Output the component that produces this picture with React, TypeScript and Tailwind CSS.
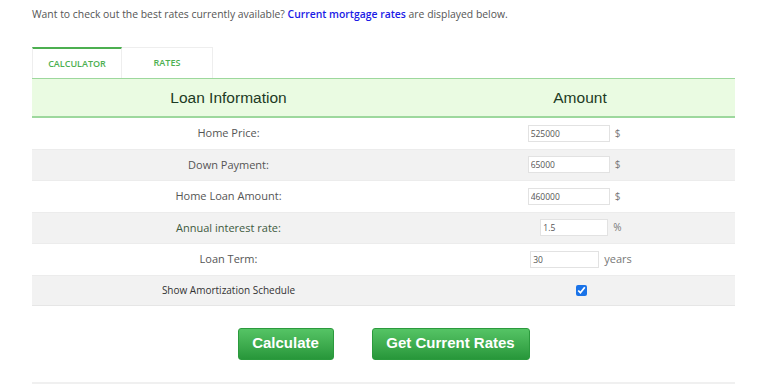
const rows = [
    { label: 'Home Price:', value: '525000', unit: '$', inputW: 'w-[82px]', tone: 'text-[#555]', shift: 'pr-[12px]' },
    { label: 'Down Payment:', value: '65000', unit: '$', inputW: 'w-[82px]', tone: 'text-[#555]', shift: 'pr-[12px]' },
    { label: 'Home Loan Amount:', value: '460000', unit: '$', inputW: 'w-[82px]', tone: 'text-[#555]', shift: 'pr-[12px]' },
    { label: 'Annual interest rate:', value: '1.5', unit: '%', inputW: 'w-[68px]', tone: 'text-[#3e5a3e]', shift: 'pl-[2px]' },
    { label: 'Loan Term:', value: '30', unit: 'years', inputW: 'w-[69px]', tone: 'text-[#555]', shift: 'pl-[2px]' },
];

export default function App() {
    return (
        <div className="w-[768px] h-[387px] bg-white overflow-hidden font-['Open_Sans',sans-serif]">
            {/* Intro line */}
            <p className="pl-[32px] pt-[6px] text-[10.4px] text-[#555] leading-[16px]">
                Want to check out the best rates currently available?{' '}
                <a className="text-[#1a1ae6] font-semibold">Current mortgage rates</a> are displayed below.
            </p>

            <div className="mx-[32px] mt-[25px] w-[703px]">
                {/* Tabs */}
                <div className="flex h-[31px]">
                    <div className="w-[90px] border-t-2 border-t-[#4caf50] border-x border-[#eee] flex items-center justify-center text-[9px] font-semibold text-[#4caf50]">
                        CALCULATOR
                    </div>
                    <div className="w-[91px] border-t border-r border-[#eee] flex items-center justify-center text-[9px] font-semibold text-[#4caf50]">
                        RATES
                    </div>
                </div>

                {/* Header */}
                <div className="flex h-[40px] bg-[#eafbe2] border-t border-b-2 border-[#9dd89d] font-['Liberation_Sans',sans-serif] text-[15.5px] text-[#1d3a24]">
                    <div className="w-[393px] flex items-center justify-center">Loan Information</div>
                    <div className="flex-1 flex items-center justify-center">Amount</div>
                </div>

                {/* Rows */}
                {rows.map((r, i) => (
                    <div
                        key={r.label}
                        className={`flex h-[31.5px] border-b border-[#ececec] ${i % 2 === 1 ? 'bg-[#f2f2f2]' : 'bg-white'}`}
                    >
                        <div className={`w-[393px] flex items-center justify-center text-[11px] ${r.tone}`}>{r.label}</div>
                        <div className={`flex-1 flex items-center justify-center gap-[5px] ${r.shift}`}>
                            <input
                                readOnly
                                value={r.value}
                                className={`${r.inputW} h-[17px] border border-[#e2e2e2] bg-white px-[2px] text-[8.5px] text-[#555] outline-none`}
                            />
                            <span className={`text-[#777] ${r.unit === 'years' ? 'text-[11px]' : 'text-[10px]'}`}>{r.unit}</span>
                        </div>
                    </div>
                ))}
                <div className="flex h-[30px] bg-[#f2f2f2] border-b border-[#e6e6e6]">
                    <div className="w-[393px] flex items-center justify-center text-[10px] text-[#333]">Show Amortization Schedule</div>
                    <div className="flex-1 flex items-center justify-center pl-[2px]">
                        <input type="checkbox" readOnly checked className="w-[11px] h-[11px] accent-[#1a73e8]" />
                    </div>
                </div>

                {/* Buttons */}
                <div className="flex justify-center gap-[38px] pt-[22px] font-['Liberation_Sans',sans-serif]">
                    <button className="w-[96px] h-[32px] rounded-[3px] bg-gradient-to-b from-[#55c465] to-[#27973a] text-white font-bold text-[15px] border border-[#2b9a3d]">
                        Calculate
                    </button>
                    <button className="w-[158px] h-[32px] rounded-[3px] bg-gradient-to-b from-[#55c465] to-[#27973a] text-white font-bold text-[15px] border border-[#2b9a3d]">
                        Get Current Rates
                    </button>
                </div>

                <div className="mt-[22px] h-[2px] bg-[#f0f0f0]" />
            </div>
        </div>
    );
}
